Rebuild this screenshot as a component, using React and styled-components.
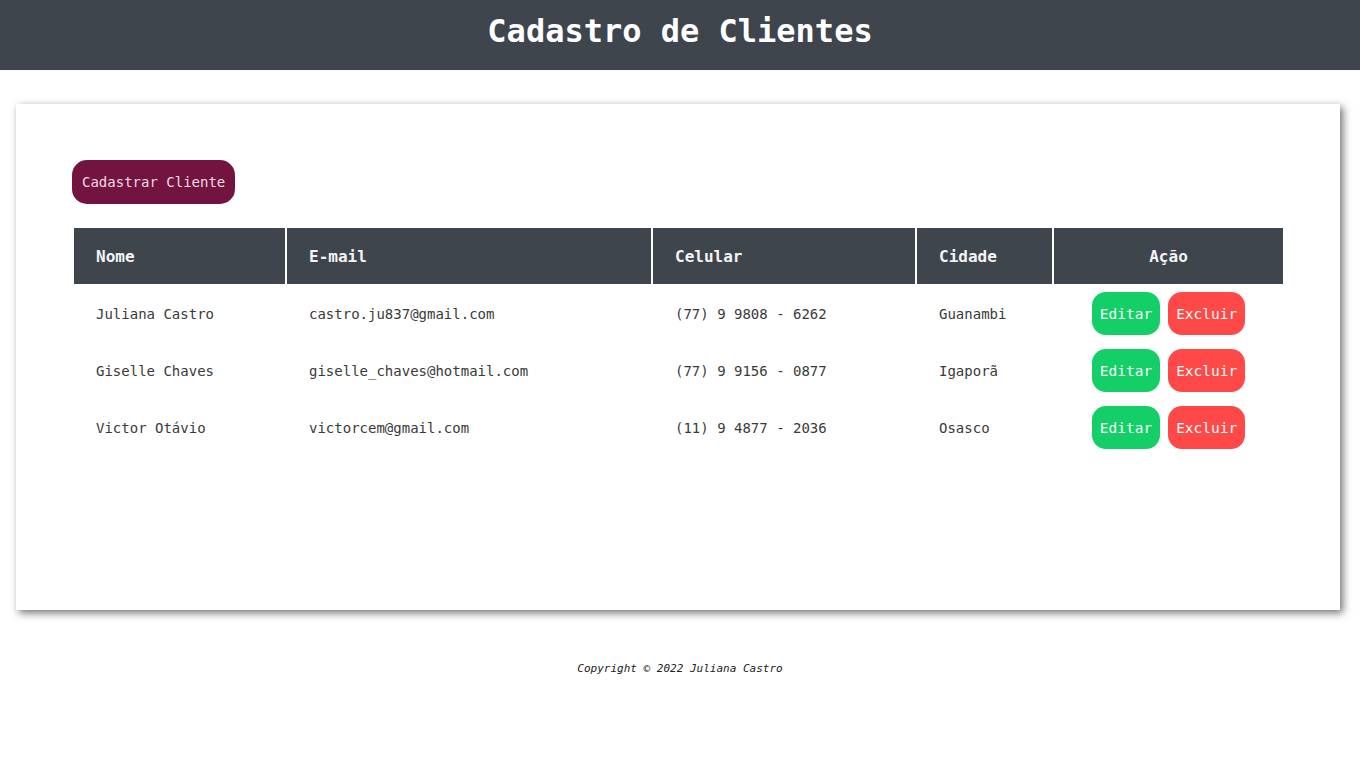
import React from 'react';
import styled, { createGlobalStyle } from 'styled-components';

const GlobalStyle = createGlobalStyle`
    body {
        margin: 0;
        background: #ffffff;
        font-family: 'DejaVu Sans Mono', 'Liberation Mono', monospace;
    }
`;

const Header = styled.header`
    height: 70px;
    background-color: #3f454d;
    display: flex;
    align-items: center;
    justify-content: center;
`;
const Title = styled.h1`
    margin: 0;
    color: #ffffff;
    font-size: 32px;
    font-weight: bold;
    padding-bottom: 8px;
`;
const Card = styled.main`
    margin: 34px 20px 0 16px;
    min-height: 506px;
    box-sizing: border-box;
    padding: 56px 54px 40px 56px;
    background: #ffffff;
    box-shadow: 3px 3px 8px rgba(0, 0, 0, 0.55);
`;
const NewButton = styled.button`
    height: 44px;
    padding: 0 10px;
    border: none;
    border-radius: 15px;
    background-color: #72143f;
    color: #f3d9e4;
    font-family: inherit;
    font-size: 14px;
    cursor: pointer;
`;
const Table = styled.table`
    margin-top: 22px;
    border-collapse: separate;
    border-spacing: 2px;
`;
const Th = styled.th`
    height: 56px;
    box-sizing: border-box;
    padding: 0 22px;
    background-color: #3f454d;
    color: #f4f4f4;
    font-size: 16px;
    font-weight: bold;
    text-align: ${({ $center }) => ($center ? 'center' : 'left')};
    width: ${({ $w }) => $w}px;
`;
const Td = styled.td`
    height: 55px;
    padding: 0 22px;
    color: #3a3a3a;
    font-size: 14px;
    text-align: ${({ $center }) => ($center ? 'center' : 'left')};
`;
const ActionButton = styled.button`
    height: 43px;
    padding: 0 8px;
    margin: 0 4px;
    border: none;
    border-radius: 14px;
    background-color: ${({ $danger }) => ($danger ? '#ff4848' : '#14cf67')};
    color: #f8fff9;
    font-family: inherit;
    font-size: 14.5px;
    cursor: pointer;
`;
const Footer = styled.footer`
    margin-top: 52px;
    text-align: center;
    font-size: 11px;
    font-style: italic;
    color: #222;
`;

const clientes = [
    { nome: 'Juliana Castro', email: 'castro.ju837@gmail.com', celular: '(77) 9 9808 - 6262', cidade: 'Guanambi' },
    { nome: 'Giselle Chaves', email: 'giselle_chaves@hotmail.com', celular: '(77) 9 9156 - 0877', cidade: 'Igaporã' },
    { nome: 'Victor Otávio', email: 'victorcem@gmail.com', celular: '(11) 9 4877 - 2036', cidade: 'Osasco' },
];

const App = () => {
    return (
        <>
            <GlobalStyle />
            <Header>
                <Title>Cadastro de Clientes</Title>
            </Header>
            <Card>
                <NewButton>Cadastrar Cliente</NewButton>
                <Table>
                    <thead>
                        <tr>
                            <Th $w={211}>Nome</Th>
                            <Th $w={364}>E-mail</Th>
                            <Th $w={262}>Celular</Th>
                            <Th $w={135}>Cidade</Th>
                            <Th $w={229} $center>Ação</Th>
                        </tr>
                    </thead>
                    <tbody>
                        {clientes.map((c) => (
                            <tr key={c.email}>
                                <Td>{c.nome}</Td>
                                <Td>{c.email}</Td>
                                <Td>{c.celular}</Td>
                                <Td>{c.cidade}</Td>
                                <Td $center>
                                    <ActionButton>Editar</ActionButton>
                                    <ActionButton $danger>Excluir</ActionButton>
                                </Td>
                            </tr>
                        ))}
                    </tbody>
                </Table>
            </Card>
            <Footer>Copyright © 2022 Juliana Castro</Footer>
        </>
    );
};

export default App;
